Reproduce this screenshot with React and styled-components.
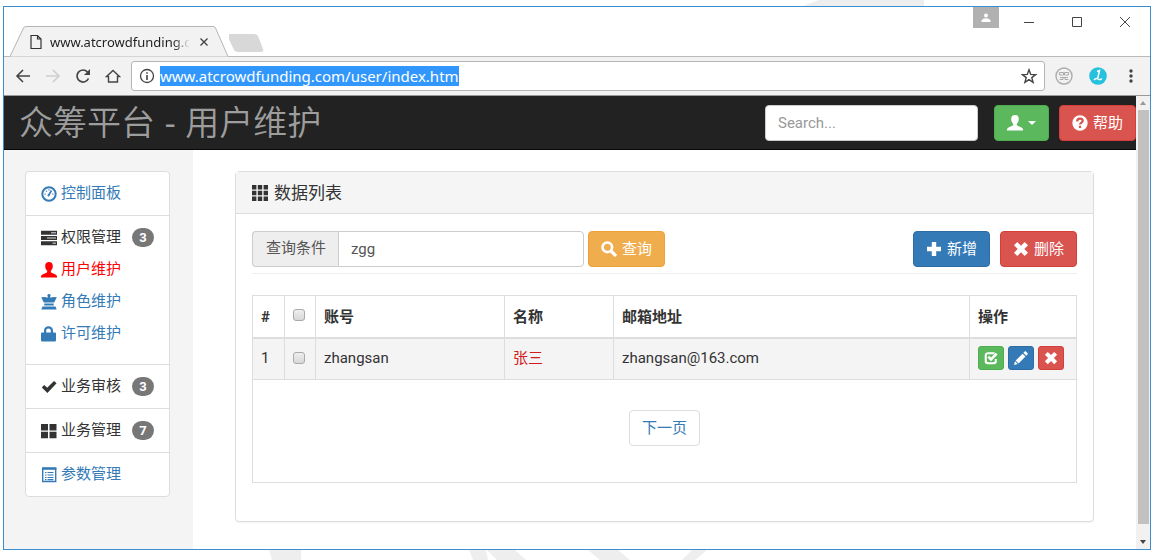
import React from 'react'
import styled, { createGlobalStyle, css } from 'styled-components'

const GlobalStyle = createGlobalStyle`
  * {
    box-sizing: border-box;
  }

  body {
    margin: 0;
    background-color: #fff;
    color: #333;
    font-family: Roboto, "Noto Sans CJK SC", sans-serif;
    font-size: 15px;
    line-height: 22px;
  }

  button, input {
    font-family: inherit;
    font-size: inherit;
    line-height: inherit;
  }
`

const Page = styled.div`
  position: relative;
  display: flex;
  min-height: 100vh;
  padding: 6px 1px 10px 3px;
  overflow: hidden;
`

const Watermark = styled.svg`
  position: absolute;
  left: 0;
  ${props => props.$bottom ? 'bottom: 0;' : 'top: 0;'}
  fill: #eee;
`

const BrowserWindow = styled.div`
  position: relative;
  flex: 1;
  min-width: 0;
  display: flex;
  flex-direction: column;
  border: 1px solid #3b8fd0;
  background-color: #fff;
`

/* browser chrome */

const TitleBar = styled.div`
  display: flex;
  justify-content: space-between;
  height: 49px;
`

const Tabs = styled.div`
  display: flex;
  align-items: flex-end;
  padding-left: 5px;
`

const Tab = styled.div`
  position: relative;
  z-index: 1;
  display: flex;
  align-items: center;
  width: 220px;
  height: 31px;
  padding: 0 12px 0 21px;
  margin-bottom: -1px;
`

const TabShape = styled.svg`
  position: absolute;
  left: 0;
  top: 0;
  width: 100%;
  height: 100%;
  z-index: -1;
`

const TabTitle = styled.span`
  flex: 1;
  white-space: nowrap;
  margin-left: 8px;
  font-family: "Noto Sans", sans-serif;
  font-size: 13px;
  color: #222;
  mask-image: linear-gradient(to right, #000 88%, transparent);
`

const PlainButton = styled.button`
  display: flex;
  align-items: center;
  justify-content: center;
  width: ${props => props.$width || 30}px;
  height: ${props => props.$height || 30}px;
  padding: 0;
  border: 0;
  background: none;
  color: #444;
`

const NewTab = styled(PlainButton)`
  align-self: flex-end;
  margin-bottom: 3px;
`

const WindowButtons = styled.div`
  display: flex;
  align-items: flex-start;
  padding-right: 1px;
`

const ProfileButton = styled(PlainButton)`
  width: 26px;
  height: 21px;
  margin-right: 6px;
  background-color: #b1b1b1;
  color: #fff;
`

const AddressBar = styled.div`
  display: flex;
  align-items: center;
  height: 40px;
  padding: 0 3px 0 4px;
  border-top: 1px solid #b9b9b9;
  border-bottom: 1px solid #999;
  background-color: #f2f2f2;
`

const Omnibox = styled.div`
  flex: 1;
  display: flex;
  align-items: center;
  height: 30px;
  margin: 0 2px 0 3px;
  padding: 0 7px;
  border: 1px solid #b5b5b5;
  border-radius: 3px;
  background-color: #fff;
  color: #444;
`

const UrlText = styled.span`
  margin-left: 5px;
  background-color: #3297fd;
  color: #fff;
  font-family: "Noto Sans", sans-serif;
  font-size: 15px;
  line-height: 20px;
`

const Spacer = styled.div`
  flex: 1;
`

/* page */

const Viewport = styled.div`
  flex: 1;
  display: flex;
`

const Site = styled.div`
  flex: 1;
  min-width: 0;
  display: flex;
  flex-direction: column;
`

const Navbar = styled.header`
  display: flex;
  align-items: center;
  justify-content: space-between;
  height: 54px;
  padding-left: 15px;
  border-bottom: 1px solid #080808;
  background-color: #222;
`

const Brand = styled.h1`
  margin: 0;
  color: #9d9d9d;
  font-family: "Liberation Sans", "Noto Sans CJK SC", sans-serif;
  font-size: 34px;
  font-weight: 350;
  line-height: 52px;
`

const NavTools = styled.div`
  display: flex;
  gap: 10px;
`

const inputStyle = css`
  height: 36px;
  padding: 0 12px;
  border: 1px solid #ccc;
  border-radius: 4px;
  background-color: #fff;
  color: #555;
  outline: none;
`

const SearchInput = styled.input`
  ${inputStyle}
  width: 213px;
  margin-right: 6px;

  &::placeholder {
    color: #999;
  }
`

const colors = {
  success: ['#5cb85c', '#4cae4c'],
  danger: ['#d9534f', '#d43f3a'],
  warning: ['#f0ad4e', '#eea236'],
  primary: ['#337ab7', '#2e6da4'],
}

const Button = styled.button`
  display: inline-flex;
  align-items: center;
  justify-content: center;
  gap: ${props => props.$small ? 0 : 5}px;
  height: ${props => props.$small ? 24 : 36}px;
  padding: 0 ${props => props.$small ? 5 : 12}px;
  border: 1px solid ${props => colors[props.$color][1]};
  border-radius: ${props => props.$small ? 3 : 4}px;
  background-color: ${props => colors[props.$color][0]};
  color: #fff;
  white-space: nowrap;
`

const Caret = styled.span`
  border-top: 4px solid;
  border-left: 4px solid transparent;
  border-right: 4px solid transparent;
`

const Body = styled.div`
  flex: 1;
  display: flex;
`

const Sidebar = styled.nav`
  width: 189px;
  padding: 21px 23px 0 21px;
  background-color: #f4f4f4;
`

const Menu = styled.ul`
  margin: 0;
  padding: 0;
  list-style: none;
  border: 1px solid #ddd;
  border-radius: 4px;
  background-color: #fff;
  line-height: 23px;
`

const MenuItem = styled.li`
  padding: 10px 15px;

  & + & {
    border-top: 1px solid #ddd;
  }
`

const SubMenu = styled.ul`
  margin: 0;
  padding: 9px 0;
  list-style: none;

  li + li {
    margin-top: 9px;
  }
`

const MenuLabel = styled.span`
  display: flex;
  align-items: center;
  gap: 4px;
`

const MenuLink = styled(MenuLabel)`
  color: ${props => props.$active ? 'red' : '#337ab7'};
  text-decoration: none;
`

const Badge = styled.span`
  min-width: 22px;
  margin-left: auto;
  border-radius: 10px;
  background-color: #777;
  color: #fff;
  font-size: 13px;
  font-weight: 700;
  line-height: 19px;
  text-align: center;
`

const Main = styled.main`
  flex: 1;
  min-width: 0;
  padding: 21px 42px 27px;
`

const Panel = styled.section`
  border: 1px solid #ddd;
  border-radius: 4px;
  box-shadow: 0 1px 1px rgba(0, 0, 0, .05);
`

const PanelHeading = styled.h2`
  display: flex;
  align-items: center;
  gap: 6px;
  height: 42px;
  margin: 0;
  padding: 0 16px;
  border-bottom: 1px solid #ddd;
  background-color: #f5f5f5;
  font-size: 17px;
  font-weight: 400;
`

const PanelBody = styled.div`
  padding: 17px 16px 38px;
`

const Filter = styled.form`
  display: flex;
  margin-bottom: 21px;
  padding-bottom: 6px;
  border-bottom: 1px solid #eee;
`

const FilterLabel = styled.label`
  height: 36px;
  padding: 0 12px 0 13px;
  border: 1px solid #ccc;
  border-right: 0;
  border-radius: 4px 0 0 4px;
  background-color: #eee;
  color: #555;
  line-height: 32px;
`

const FilterInput = styled.input`
  ${inputStyle}
  width: 246px;
  margin-right: 4px;
  border-radius: 0 4px 4px 0;
`

const Actions = styled.div`
  display: flex;
  gap: 10px;
  margin-left: auto;
`

const Table = styled.table`
  width: 100%;
  border-collapse: collapse;
  table-layout: fixed;

  th, td {
    height: 42px;
    padding: 0 8px;
    border: 1px solid #ddd;
    text-align: left;
  }

  thead th {
    padding-top: 2px;
    border-bottom-width: 2px;
  }

  tbody tr {
    background-color: #f4f4f4;
  }

  tbody td {
    padding-bottom: 2px;
  }

  tfoot td {
    height: 103px;
    padding: 0 0 6px;
    text-align: center;
  }
`

const NameCell = styled.td`
  color: #d01c1c;
`

const Checkbox = styled.input`
  appearance: none;
  display: block;
  width: 12px;
  height: 12px;
  margin: 0 0 4px;
  border: 1px solid #aaa;
  border-radius: 3px;
  background-image: linear-gradient(#eee, #d8d8d8);

  td & {
    margin: 0;
  }
`

const RowButtons = styled.div`
  display: flex;
  gap: 4px;
`

const PageLink = styled.a`
  display: inline-block;
  padding: 6px 12px;
  border: 1px solid #ddd;
  border-radius: 4px;
  color: #337ab7;
  text-decoration: none;
`

/* scrollbar of the browser window */

const Scrollbar = styled.div`
  display: flex;
  flex-direction: column;
  align-items: center;
  width: 14px;
  background-color: #f1f1f1;
`

const ScrollArrow = styled.span`
  height: 14px;
  display: flex;
  align-items: center;

  &::before {
    content: '';
    border: 3px solid transparent;
    border-top-width: 0;
    border-bottom: 4px solid #999;
  }

  &:last-child::before {
    border-top: 4px solid #444;
    border-bottom-width: 0;
  }
`

const ScrollThumb = styled.div`
  flex: 1;
  width: 11px;
  margin-bottom: 11px;
  background-color: #c1c1c1;
`

const Svg = styled.svg`
  flex: none;
  fill: currentColor;
`

const Line = styled.svg`
  flex: none;
  fill: none;
  stroke: currentColor;
`

const paths = {
  user: 'M8 0C5.600 0 4.200 1.600 4.200 4c0 1.900.8 3.700 1.900 4.700.4.900.2 1.700-.7 2.100L1.500 12.500C.5 13 0 13.700 0 14.600V15.500h16v-.9c0-.9-.5-1.600-1.500-2.100l-3.900-1.700c-.9-.4-1.100-1.200-.7-2.100 1.100-1 1.900-2.800 1.900-4.700C11.800 1.600 10.400 0 8 0z',
  tasks: 'M0 .8h16v4H0zM0 6h16v4H0zM0 11.200h16v4H0z',
  queen: 'M8 0a1.500 1.500 0 0 1 1.200 2.500V3.500h1.300L12 3l3.800.3L13.200 8.500H2.800L.2 3.300 4 3l1.500.5h1.300V2.500A1.500 1.500 0 0 1 8 0zM3.300 9.600h9.400v1.800H3.300zM1.500 12.500h13l1.200 3H.3z',
  lock: 'M3 6.500V4.600C3 2 4.900.3 7.500.3S12 2 12 4.600v1.900h1.700c.7 0 1.300.5 1.300 1.200V14c0 1-.7 1.500-1.500 1.500h-12C.7 15.500 0 15 0 14V7.700C0 7 .6 6.500 1.300 6.500zm2.200 0h4.600V4.800c0-1.400-.9-2.300-2.300-2.300S5.200 3.400 5.200 4.800z',
  ok: 'M.8 8.500l2.400-2.600 3 2.800L13 2l2.600 2.200L6.400 14z',
  large: 'M0 1h7v6.500H0zM8.500 1h7v6.500h-7zM0 8.800h7v6.500H0zM8.500 8.800h7v6.500h-7z',
  grid: 'M0 0h4.400v4.400H0zM5.800 0h4.400v4.400H5.800zM11.600 0H16v4.400h-4.400zM0 5.800h4.400v4.400H0zM5.800 5.800h4.400v4.400H5.800zM11.600 5.800H16v4.400h-4.400zM0 11.600h4.400V16H0zM5.800 11.600h4.400V16H5.800zM11.600 11.600H16V16h-4.400z',
  plus: 'M5.800 1h4.400v4.800H15v4.400h-4.800V15H5.800v-4.800H1V5.800h4.800z',
  remove: 'M4.300 1L8 4.700 11.700 1 15 4.300 11.300 8l3.700 3.700-3.300 3.300L8 11.300 4.300 15 1 11.700 4.700 8 1 4.300z',
  pencil: 'M12 .8c.6-.6 1.300-.6 1.900 0l1.400 1.400c.6.600.6 1.300 0 1.900l-1.300 1.300-3.300-3.300zM9.800 3l3.300 3.300-7.900 7.900-3.300-3.300zM1.200 11.800l3 3L0 16z',
}

function Icon({ name, size = 16 }) {
  return (
    <Svg width={size} height={size} viewBox="0 0 16 16" aria-hidden="true">
      <path fillRule="evenodd" d={paths[name]} />
      {name === 'tasks' && <path d="M10 2.800h5M6 8h9M11.500 13.200H15" stroke="#ddd" strokeWidth="1" />}
    </Svg>
  )
}

function SearchIcon() {
  return (
    <Line width="16" height="16" viewBox="0 0 16 16" strokeWidth="2.600">
      <circle cx="6.300" cy="6.300" r="4.800" />
      <path d="M10 10l5 5" strokeWidth="3.200" />
    </Line>
  )
}

function HelpIcon() {
  return (
    <Svg width="16" height="16" viewBox="0 0 16 16">
      <circle cx="8" cy="8" r="7.700" />
      <g fill="none" stroke="#d9534f" strokeWidth="2.200">
        <path d="M5.200 6.400C5.200 4.500 6.400 3.600 8 3.600s2.700.9 2.700 2.300C10.700 7.600 8 7.600 8 9.600M8 10.800V13" />
      </g>
    </Svg>
  )
}

function DashboardIcon() {
  return (
    <Line width="16" height="16" viewBox="0 0 16 16" strokeWidth="2">
      <circle cx="8" cy="8" r="6.700" />
      <path d="M7.500 9.500l3-5" strokeWidth="1.600" />
      <path d="M3.500 8h1.300M5 4.800l.9.900M8 3.300v1.200M11.200 8h1.300" strokeWidth="1.200" />
      <circle cx="7.600" cy="9.300" r=".8" strokeWidth="1" />
    </Line>
  )
}

function ListIcon() {
  return (
    <Line width="16" height="16" viewBox="0 0 16 16">
      <path d="M1.700 1v13.500h13V1" strokeWidth="1.400" />
      <path d="M1 1.500h14.400" strokeWidth="2.600" />
      <path d="M4 5.500h1.500M4 8h1.500M4 10.500h1.500M4 12.700h1.500M6.500 5.500h6M6.500 8h6M6.500 10.500h6M6.500 12.700h6" strokeWidth="1.200" />
    </Line>
  )
}

function CheckIcon() {
  return (
    <Line width="14" height="14" viewBox="0 0 16 16" strokeWidth="2.400">
      <path d="M12 2.500H4.500a2.500 2.500 0 0 0-2.500 2.500v6.500A2.500 2.500 0 0 0 4.500 14H11a2.500 2.500 0 0 0 2.500-2.500V9" />
      <path d="M5 6.500l3 3 6.500-6.500" strokeWidth="3" />
    </Line>
  )
}

// the mail column takes the width that is left
const columns = [32, 31, 189, 109, undefined, 107]

export default function App() {
  return (
    <Page>
      <GlobalStyle />
      <Watermark width="1152" height="6">
        <path d="M803 6L819 0H924V6z" />
      </Watermark>
      <Watermark $bottom width="1152" height="10">
        <path d="M269 0H301V10H272zM469 0H486L488 10H473zM487 0H515L526 10H497zM588 0H618L630 10H600zM692 0H707L695 10H682z" />
      </Watermark>
      <BrowserWindow>
        <TitleBar>
          <Tabs>
            <Tab>
              <TabShape viewBox="0 0 220 31" preserveAspectRatio="none">
                <path d="M1 30.500L14.500 2Q15 .5 17 .5H204Q206 .5 206.500 2L219 30.500" fill="#f2f2f2" stroke="#b5b5b5" />
              </TabShape>
              <Line width="12" height="16" viewBox="0 0 12 16" strokeWidth="1.200">
                <path d="M1 1.500h6.500L11 5v9.500H1zM7.500 1.500V5H11" />
              </Line>
              <TabTitle>www.atcrowdfunding.c</TabTitle>
              <PlainButton $width={28} $height={24} aria-label="Close tab">
                <Line width="8" height="8" viewBox="0 0 8 8" strokeWidth="1.400"><path d="M.5.5l7 7M7.500.5l-7 7" /></Line>
              </PlainButton>
            </Tab>
            <NewTab $width={38} $height={20} aria-label="New tab">
              <svg width="38" height="20"><path d="M1 1H25Q28 1 29 3L34 16Q35 19 32 19H9Q6 19 5 17L-1 4Q-2 1 1 1z" fill="#d8d8d8" /></svg>
            </NewTab>
          </Tabs>
          <WindowButtons>
            <ProfileButton aria-label="Profile">
              <Svg width="10" height="10" viewBox="0 0 10 10"><circle cx="5" cy="2.500" r="2" /><path d="M.5 9V7.500Q1.500 5.300 5 5.300T9.500 7.500V9z" /></Svg>
            </ProfileButton>
            <PlainButton $width={48} aria-label="Minimize"><Line width="12" height="12"><path d="M1 6.500h10" /></Line></PlainButton>
            <PlainButton $width={48} aria-label="Maximize"><Line width="12" height="12"><path d="M1.500 1.500h9v9h-9z" /></Line></PlainButton>
            <PlainButton $width={48} aria-label="Close"><Line width="12" height="12"><path d="M1 1l10 10M11 1L1 11" /></Line></PlainButton>
          </WindowButtons>
        </TitleBar>
        <AddressBar>
          <PlainButton aria-label="Back"><Line width="16" height="16" strokeWidth="1.600"><path d="M15 8H2M8 2L2 8l6 6" /></Line></PlainButton>
          <PlainButton aria-label="Forward" disabled><Line width="16" height="16" strokeWidth="1.600" opacity=".2"><path d="M1 8h13M8 2l6 6-6 6" /></Line></PlainButton>
          <PlainButton aria-label="Reload">
            <Line width="16" height="16" strokeWidth="1.700"><path d="M13.500 10.500A6 6 0 1 1 12.500 4L14 5.500" /><path d="M15 1v6H9z" fill="currentColor" stroke="none" /></Line>
          </PlainButton>
          <PlainButton aria-label="Home"><Line width="16" height="16" strokeWidth="1.400"><path d="M1.500 8.500L8 2.500l6.500 6H12.500V14h-9V8.500z" /></Line></PlainButton>
          <Omnibox>
            <Line width="16" height="16" strokeWidth="1.300"><circle cx="8" cy="8" r="6.500" /><path d="M8 7v5M8 4.200v1.600" strokeWidth="1.600" /></Line>
            <UrlText>www.atcrowdfunding.com/user/index.htm</UrlText>
            <Spacer />
            <Line width="16" height="16" strokeWidth="1.400"><path d="M8 1.800l1.700 4.600 4.900.2-3.800 3 1.300 4.700L8 11.600l-4.100 2.700 1.300-4.700-3.800-3 4.900-.2z" /></Line>
          </Omnibox>
          <PlainButton $width={34} aria-label="Extension">
            <Line width="18" height="18" opacity=".4" strokeWidth="1.400"><circle cx="9" cy="9" r="8" /><path d="M4.500 5.500h4v2.500h-4zM9.500 5.500h4v2.500h-4zM5 10.500h8M4.500 12.500h3.500V10.500M13.500 12.500H10V10.500" strokeWidth="1" /></Line>
          </PlainButton>
          <PlainButton $width={34} aria-label="Extension">
            <svg width="18" height="18"><circle cx="9" cy="9" r="8.800" fill="#26c1dc" /><path d="M8 4.500L10.500 3.500 8.800 11M5 13Q7 10.500 9 12T13 11.500" fill="none" stroke="#fff" strokeWidth="1.500" /></svg>
          </PlainButton>
          <PlainButton $width={32} aria-label="Menu"><Svg width="16" height="16"><circle cx="8" cy="3" r="1.700" /><circle cx="8" cy="8" r="1.700" /><circle cx="8" cy="13" r="1.700" /></Svg></PlainButton>
        </AddressBar>
        <Viewport>
          <Site>
            <Navbar>
              <Brand>众筹平台 - 用户维护</Brand>
              <NavTools>
                <SearchInput type="text" placeholder="Search..." aria-label="Search" />
                <Button $color="success" aria-label="User menu"><Icon name="user" /><Caret /></Button>
                <Button $color="danger"><HelpIcon />帮助</Button>
              </NavTools>
            </Navbar>
            <Body>
              <Sidebar>
                <Menu>
                  <MenuItem><MenuLink as="a" href="#main"><DashboardIcon />控制面板</MenuLink></MenuItem>
                  <MenuItem>
                    <MenuLabel><Icon name="tasks" />权限管理<Badge>3</Badge></MenuLabel>
                    <SubMenu>
                      <li><MenuLink as="a" href="#user" $active><Icon name="user" />用户维护</MenuLink></li>
                      <li><MenuLink as="a" href="#role"><Icon name="queen" />角色维护</MenuLink></li>
                      <li><MenuLink as="a" href="#permission"><Icon name="lock" />许可维护</MenuLink></li>
                    </SubMenu>
                  </MenuItem>
                  <MenuItem><MenuLabel><Icon name="ok" />业务审核<Badge>3</Badge></MenuLabel></MenuItem>
                  <MenuItem><MenuLabel><Icon name="large" />业务管理<Badge>7</Badge></MenuLabel></MenuItem>
                  <MenuItem><MenuLink as="a" href="#param"><ListIcon />参数管理</MenuLink></MenuItem>
                </Menu>
              </Sidebar>
              <Main>
                <Panel>
                  <PanelHeading><Icon name="grid" />数据列表</PanelHeading>
                  <PanelBody>
                    <Filter>
                      <FilterLabel htmlFor="condition">查询条件</FilterLabel>
                      <FilterInput id="condition" type="text" defaultValue="zgg" />
                      <Button type="button" $color="warning"><SearchIcon />查询</Button>
                      <Actions>
                        <Button type="button" $color="primary"><Icon name="plus" />新增</Button>
                        <Button type="button" $color="danger"><Icon name="remove" />删除</Button>
                      </Actions>
                    </Filter>
                    <Table>
                      <colgroup>
                        {columns.map((width, i) => <col key={i} width={width} />)}
                      </colgroup>
                      <thead>
                        <tr>
                          <th>#</th>
                          <th><Checkbox type="checkbox" aria-label="全选" /></th>
                          <th>账号</th>
                          <th>名称</th>
                          <th>邮箱地址</th>
                          <th>操作</th>
                        </tr>
                      </thead>
                      <tbody>
                        <tr>
                          <td>1</td>
                          <td><Checkbox type="checkbox" aria-label="zhangsan" /></td>
                          <td>zhangsan</td>
                          <NameCell>张三</NameCell>
                          <td>zhangsan@163.com</td>
                          <td>
                            <RowButtons>
                              <Button $small $color="success" aria-label="分配角色"><CheckIcon /></Button>
                              <Button $small $color="primary" aria-label="修改"><Icon name="pencil" size={14} /></Button>
                              <Button $small $color="danger" aria-label="删除"><Icon name="remove" size={14} /></Button>
                            </RowButtons>
                          </td>
                        </tr>
                      </tbody>
                      <tfoot>
                        <tr>
                          <td colSpan={6}><PageLink href="#next">下一页</PageLink></td>
                        </tr>
                      </tfoot>
                    </Table>
                  </PanelBody>
                </Panel>
              </Main>
            </Body>
          </Site>
          <Scrollbar>
            <ScrollArrow />
            <ScrollThumb />
            <ScrollArrow />
          </Scrollbar>
        </Viewport>
      </BrowserWindow>
    </Page>
  )
}
